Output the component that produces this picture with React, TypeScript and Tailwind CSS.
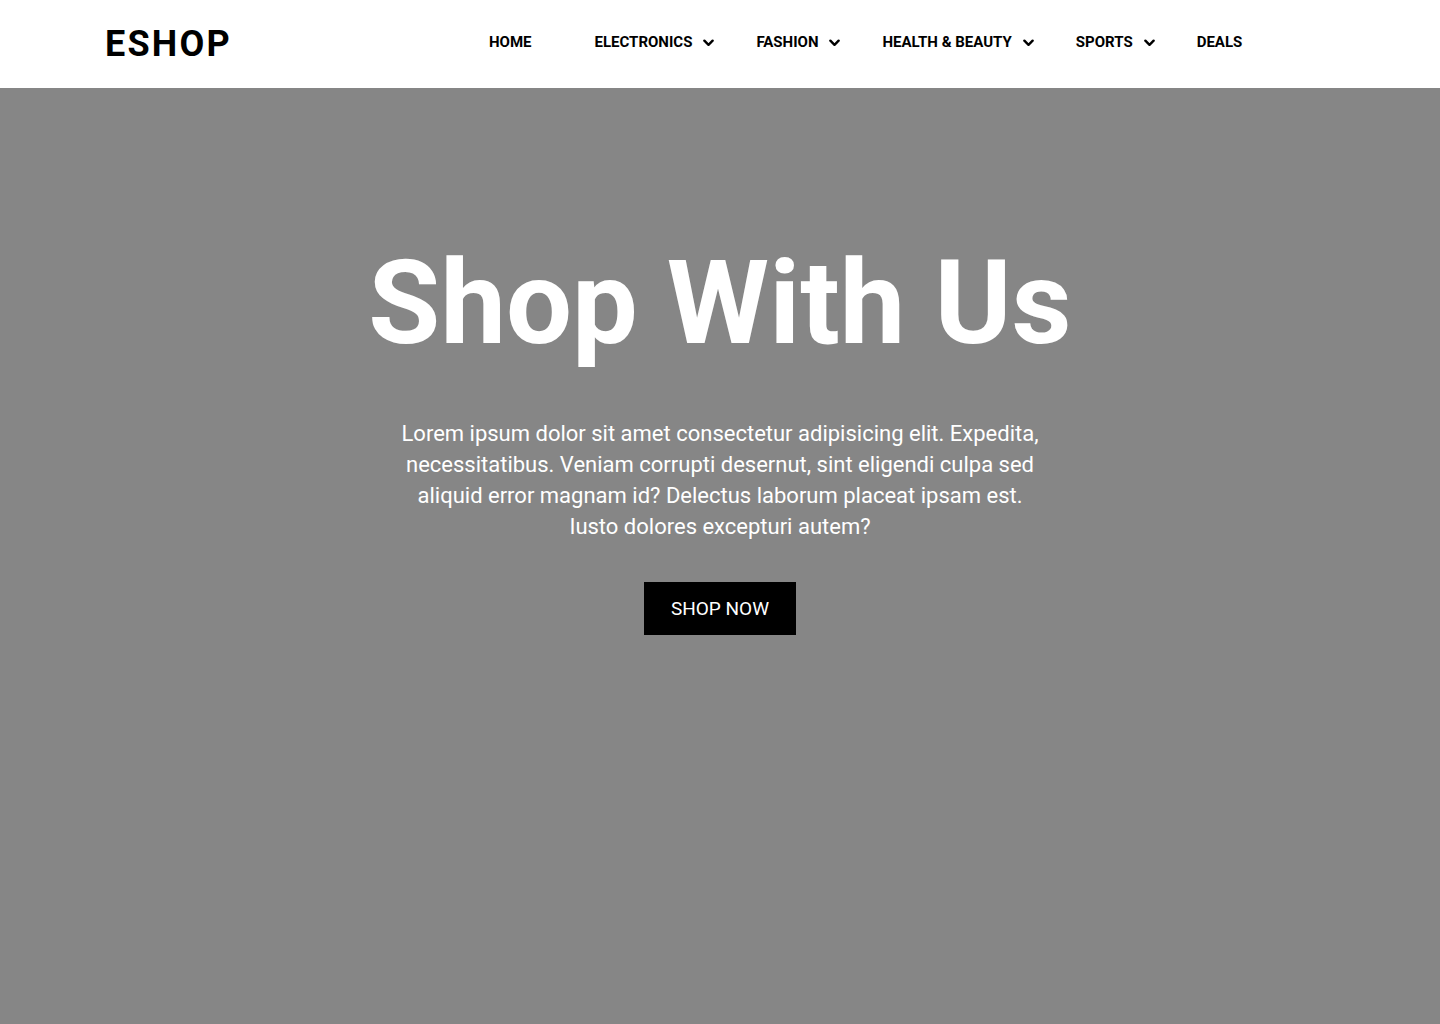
export default function App() {
  const navItems = [
    { label: "HOME", dropdown: false },
    { label: "ELECTRONICS", dropdown: true },
    { label: "FASHION", dropdown: true },
    { label: "HEALTH & BEAUTY", dropdown: true },
    { label: "SPORTS", dropdown: true },
    { label: "DEALS", dropdown: false },
  ];

  return (
    <div className="min-h-[1024px] flex flex-col font-['Roboto',sans-serif]">
      <header className="h-[88px] bg-white flex items-center px-[106px]">
        <div className="w-[124px] -ml-px text-[36px] leading-none font-bold tracking-[2.2px] text-black">
          ESHOP
        </div>
        <nav className="ml-[260px]">
          <ul className="flex items-center gap-[42px]">
            {navItems.map((item, index) => (
              <li
                key={index}
                className={`flex items-center text-[15px] font-bold text-black mt-[-3px] ${index === 0 ? "mr-[21px]" : ""}`}
              >
                {item.label}
                {item.dropdown && (
                  <svg viewBox="0 0 12 8" className="ml-[11px] w-[11px] h-[8px]">
                    <polyline
                      points="1.5,1.5 6,6 10.5,1.5"
                      fill="none"
                      stroke="black"
                      strokeWidth="2.6"
                      strokeLinecap="round"
                      strokeLinejoin="round"
                    />
                  </svg>
                )}
              </li>
            ))}
          </ul>
        </nav>
      </header>
      <main className="flex-1 bg-[#868686] flex flex-col items-center pt-[145px] text-white text-center">
        <h1 className="text-[117px] leading-[1.2] font-bold">Shop With Us</h1>
        <p className="mt-[45px] max-w-[648px] text-[22px] leading-[31px]">
          Lorem ipsum dolor sit amet consectetur adipisicing elit. Expedita,
          necessitatibus. Veniam corrupti desernut, sint eligendi culpa sed
          aliquid error magnam id? Delectus laborum placeat ipsam est.
          Iusto dolores excepturi autem?
        </p>
        <button className="mt-[40px] bg-black text-white text-[19px] w-[152px] h-[53px]">
          SHOP NOW
        </button>
      </main>
    </div>
  );
}
